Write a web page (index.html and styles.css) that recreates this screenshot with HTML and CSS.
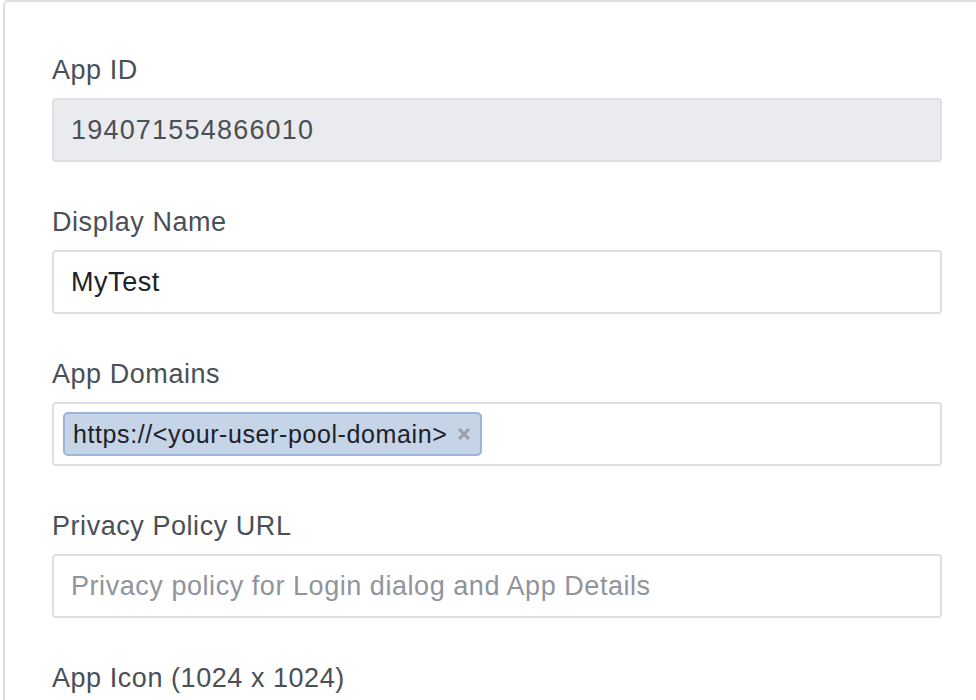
FILE: index.html
```html
<!DOCTYPE html>
<html>
<head>
<meta charset="utf-8">
<link rel="stylesheet" href="styles.css">
</head>
<body>
<div class="card">
  <div class="field">
    <div class="label">App ID</div>
    <div class="input readonly">194071554866010</div>
  </div>
  <div class="field">
    <div class="label">Display Name</div>
    <div class="input">MyTest</div>
  </div>
  <div class="field">
    <div class="label">App Domains</div>
    <div class="input tags">
      <span class="tag">https://&lt;your-user-pool-domain&gt;<svg class="tag-x" width="14" height="14" viewBox="0 0 14 14"><path d="M2 2 L12 12 M12 2 L2 12" stroke="#9a9ea6" stroke-width="3" stroke-linecap="butt"/></svg></span>
    </div>
  </div>
  <div class="field">
    <div class="label">Privacy Policy URL</div>
    <div class="input placeholder">Privacy policy for Login dialog and App Details</div>
  </div>
  <div class="field">
    <div class="label">App Icon (1024 x 1024)</div>
  </div>
</div>
</body>
</html>
```
FILE: styles.css
```css
html, body {
  margin: 0;
  padding: 0;
  background: #ffffff;
}
body {
  font-family: "Liberation Sans", Arial, sans-serif;
  width: 976px;
  height: 700px;
  overflow: hidden;
}
.card {
  margin-left: 3px;
  border-top: 2px solid #dddfe2;
  border-left: 2px solid #dddfe2;
  border-top-left-radius: 5px;
  padding: 52px 0 0 47px;
  height: 700px;
  box-sizing: border-box;
}
.field {
  margin-bottom: 44px;
  width: 890px;
}
.field:last-child {
  margin-bottom: 0;
}
.label {
  font-size: 27px;
  letter-spacing: 0.55px;
  line-height: 32px;
  color: #4b4f56;
  margin-bottom: 12px;
}
.field:last-child .label {
  margin-bottom: 0;
}
.input {
  height: 64px;
  box-sizing: border-box;
  border: 2px solid #dddfe2;
  border-radius: 4px;
  padding: 0 17px;
  display: flex;
  align-items: center;
  font-size: 27px;
  letter-spacing: 0.55px;
  color: #1d2129;
  background: #fff;
}
.readonly {
  background: #e9ebee;
  color: #4b4f56;
  letter-spacing: 1.2px;
}
.placeholder {
  color: #90949c;
}
.tags {
  padding: 0 9px;
}
.tag {
  display: inline-flex;
  align-items: center;
  height: 44px;
  box-sizing: border-box;
  background: #c6d4e8;
  border: 2px solid #9cb4d8;
  border-radius: 5px;
  padding: 0 9px 0 8px;
  font-size: 25px;
  letter-spacing: 0.6px;
  color: #1d2129;
}
.tag-x {
  margin-left: 10px;
  flex: none;
}
```
